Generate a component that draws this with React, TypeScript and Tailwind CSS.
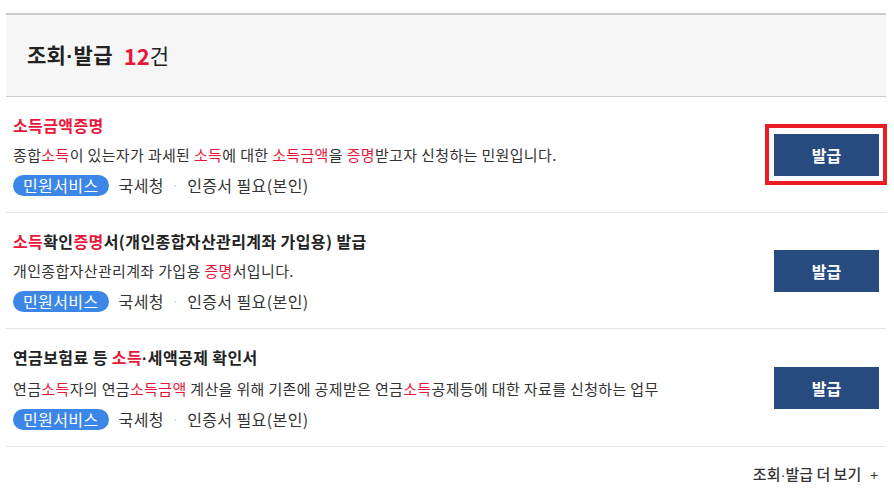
import React from "react";

const R = ({ children }: { children: React.ReactNode }) => (
  <span className="text-[#e8173c]">{children}</span>
);

const Dot = () => (
  <span style={{ fontFamily: '"Liberation Sans", sans-serif' }}>·</span>
);

function Tags() {
  return (
    <div className="mt-[8px] flex h-[22px] items-center text-[16px] tracking-[0.4px] text-[#333333]">
      <span className="flex h-[21px] items-center rounded-full bg-[#3b86e6] px-[10px] text-[16px] leading-none text-white">
        민원서비스
      </span>
      <span className="ml-[10px]">국세청</span>
      <span className="mx-[8px] text-[12px] text-[#cccccc]">·</span>
      <span>인증서 필요(본인)</span>
    </div>
  );
}

function Item({
  title,
  desc,
  highlight,
}: {
  title: React.ReactNode;
  desc: React.ReactNode;
  highlight?: boolean;
}) {
  return (
    <div className="flex items-center justify-between border-b border-[#e3e3e3] pb-[16px] pl-[7px] pr-[7px] pt-[17px]">
      <div>
        <div className="text-[16px] font-bold leading-[22px] tracking-[0.4px] text-[#222222]">{title}</div>
        <div className="mt-[8px] text-[15px] leading-[22px] tracking-[0.35px] text-[#333333]">{desc}</div>
        <Tags />
      </div>
      <div className="relative">
        {highlight && (
          <div className="absolute -bottom-[9px] -left-[9px] -right-[8px] -top-[10px] border-[4px] border-[#ec1c24]" />
        )}
        <button className="flex h-[42px] w-[105px] items-center justify-center bg-[#274b7e] text-[16px] font-bold text-white">
          발급
        </button>
      </div>
    </div>
  );
}

export default function App() {
  return (
    <div
      className="h-[494px] w-[894px] bg-white pl-[6px] pr-[8px] pt-[13px]"
      style={{ fontFamily: '"Noto Sans CJK KR", "Noto Sans", sans-serif' }}
    >
      <div className="flex h-[84px] items-center border-b border-t-2 border-[#cccccc] bg-[#f6f6f6] pl-[21px]">
        <span className="text-[21px] font-bold tracking-[0.3px] text-[#222222]">
          조회<Dot />발급
        </span>
        <span className="ml-[11px] text-[22px] font-bold text-[#e8173c]">12</span>
        <span className="text-[21px] text-[#222222]">건</span>
      </div>
      <Item
        highlight
        title={<R>소득금액증명</R>}
        desc={
          <>
            종합<R>소득</R>이 있는자가 과세된 <R>소득</R>에 대한 <R>소득금액</R>을 <R>증명</R>받고자 신청하는 민원입니다.
          </>
        }
      />
      <Item
        title={
          <>
            <R>소득</R>확인<R>증명</R>서(개인종합자산관리계좌 가입용) 발급
          </>
        }
        desc={
          <>
            개인종합자산관리계좌 가입용 <R>증명</R>서입니다.
          </>
        }
      />
      <Item
        title={
          <>
            연금보험료 등 <R>소득</R>
            <Dot />
            세액공제 확인서
          </>
        }
        desc={
          <>
            연금<R>소득</R>자의 연금<R>소득금액</R> 계산을 위해 기존에 공제받은 연금<R>소득</R>공제등에 대한 자료를 신청하는 업무
          </>
        }
      />
      <div className="flex h-[56px] items-center justify-end pr-[8px] text-[15px] text-[#333333]">
        <span className="font-medium">
          조회<Dot />발급 더 보기
        </span>
        <span className="ml-[9px] text-[14px]">+</span>
      </div>
    </div>
  );
}
